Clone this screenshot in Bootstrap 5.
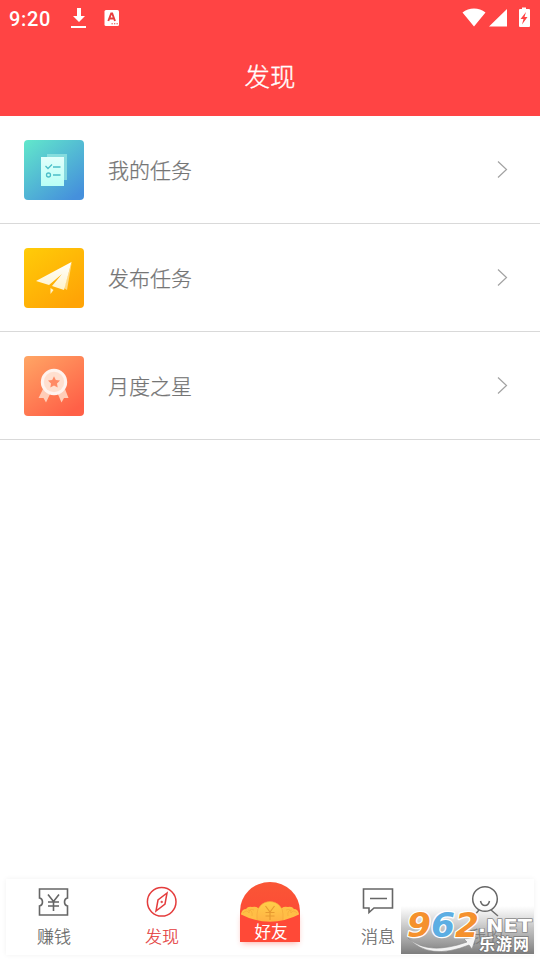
<!DOCTYPE html>
<html lang="zh-CN">
<head>
<meta charset="utf-8">
<meta name="viewport" content="width=device-width, initial-scale=1">
<title>发现</title>
<link href="https://cdn.jsdelivr.net/npm/bootstrap@5.3.0/dist/css/bootstrap.min.css" rel="stylesheet">
<style>
body{font-family:"Noto Sans CJK SC",sans-serif;font-weight:300;color:#757575;background:#fff}
svg{display:block;flex:none}
.screen{width:540px;height:960px;overflow:hidden}
.top-red{background:#ff4444;height:116px}
.status{height:36px;padding:0 9px 0 9px}
.clock{font:500 20px/36px Roboto,sans-serif;letter-spacing:.7px;width:62px;padding-top:1px}
.page-title{font-size:25.5px;line-height:38px;font-weight:300;padding-top:20px;-webkit-text-stroke:.35px currentColor}
.entry{height:108px;border-bottom:1px solid #d9d9d9;padding:0 30px 0 24px}
.entry-text{font-size:21px;line-height:32px;padding-bottom:2px;color:#757575;-webkit-text-stroke:.25px currentColor}
.dock{height:76px;margin:0 6px 5px;box-shadow:0 0 5px rgba(0,0,0,.06);background:#fff}
.dock-item{flex:none;width:108px;font-size:17px;line-height:24px;color:#666;padding-top:5px}
.dock-item.edge-start{width:102px;padding-right:6px}
.dock-item.edge-end{width:102px;padding-left:6px}
.dock-item.on{color:#e43c3c}
.dock-item svg{margin-bottom:4px}
.dock-item span{-webkit-text-stroke:.2px currentColor}
.wm{right:0;bottom:1px}
</style>
</head>
<body>
<div class="screen d-flex flex-column">
  <header class="top-red text-white">
    <div class="status d-flex align-items-center">
      <span class="clock">9:20</span>
      <svg width="16" height="22" viewBox="0 0 16 22" fill="#fff"><path d="M6 1h4v8h4l-6 6-6-6h4zM0 19h15v2H0z"/></svg>
      <svg class="ms-3" width="18" height="20" viewBox="0 0 18 20"><rect x="1.500" y="2" width="14.500" height="16" rx="1.500" fill="#fff"/><path d="M5.300 13 8.200 5.500h1L12 13M6.500 10.500h4.400" stroke="#e83e3e" stroke-width="1.900" fill="none"/><path d="M8.500 15.800h1.300M11 15.800h1.300M13.500 15.800h1.300" stroke="#e83e3e" stroke-width="1.100"/></svg>
      <svg class="ms-auto" width="69" height="24" viewBox="0 0 69 24" fill="#fff"><path d="M0.500 6.500C7 1 17 1 23.500 6.500L12 20.500zM27 20.500 45 3v17.500z"/><path d="M57 3h3V1.500h4V3h3q1 0 1 1v16q0 1-1 1h-9q-1 0-1-1V4q0-1 1-1z"/><path d="m64 6-5.500 7h3l-1.500 5.500 5.500-7.500h-3z" fill="#ff4444"/></svg>
    </div>
    <h1 class="page-title text-center m-0">发现</h1>
  </header>

  <main class="flex-grow-1">
    <a class="entry d-flex align-items-center text-decoration-none">
      <svg width="60" height="60" viewBox="0 0 60 60">
        <defs><linearGradient id="teal" x2=".8" y2="1"><stop stop-color="#62e8cb"/><stop offset="1" stop-color="#4590dc"/></linearGradient><linearGradient id="paper" x2="0" y2="1"><stop stop-color="#e2fffc"/><stop offset="1" stop-color="#b9fff5"/></linearGradient></defs>
        <rect width="60" height="60" rx="4" fill="url(#teal)"/><path d="M23 14h20v26H23z" fill="#96e5e1" opacity=".75"/><path d="M17 17h23v29H17z" fill="url(#paper)"/>
        <g fill="none" stroke="#4bbec8" stroke-width="1.300"><path d="m21.500 26 2.500 2.500 4-4M29 27h7.500M29 35h7.500"/><circle cx="24.500" cy="35" r="2"/></g>
      </svg>
      <span class="entry-text ms-4">我的任务</span>
      <svg class="ms-auto" width="14" height="20" viewBox="0 0 14 20"><path d="m2 1.500 8.500 8-8.500 8" fill="none" stroke="#a3a3a3" stroke-width="1.200"/></svg>
    </a>
    <a class="entry d-flex align-items-center text-decoration-none">
      <svg width="60" height="60" viewBox="0 0 60 60">
        <defs><linearGradient id="gold" x2=".7" y2="1"><stop stop-color="#ffcc08"/><stop offset="1" stop-color="#ffa406"/></linearGradient><linearGradient id="plane" x2="0" y2="1"><stop stop-color="#fff"/><stop offset="1" stop-color="#fff1c4"/></linearGradient></defs>
        <rect width="60" height="60" rx="4" fill="url(#gold)"/><path d="m48 13-5 29-3-2z" fill="#ffd983"/><path d="M47.500 14 12 33l13 4 13-11-10 12 12 4zM26.500 40v6l3-4z" fill="url(#plane)"/>
      </svg>
      <span class="entry-text ms-4">发布任务</span>
      <svg class="ms-auto" width="14" height="20" viewBox="0 0 14 20"><path d="m2 1.500 8.500 8-8.500 8" fill="none" stroke="#a3a3a3" stroke-width="1.200"/></svg>
    </a>
    <a class="entry d-flex align-items-center text-decoration-none">
      <svg width="60" height="60" viewBox="0 0 60 60">
        <defs><linearGradient id="coral" x2=".7" y2="1"><stop stop-color="#ffa665"/><stop offset="1" stop-color="#ff6047"/></linearGradient></defs>
        <rect width="60" height="60" rx="4" fill="url(#coral)"/><path d="m19 33-4.500 9h5l2.500 4.500L27 36zM41 33l3.500 9h-4.500l-2.500 4.500L33 36z" fill="#ffcdb8"/><circle cx="30" cy="26" r="13.200" fill="#fff3ee"/><circle cx="30" cy="26" r="10.200" fill="#ffdfcf"/><path d="m30 20.200 1.800 3.700 4.200.6-3 2.900.7 4.100-3.700-2-3.700 2 .7-4.100-3-2.900 4.200-.6z" fill="#ff8a65"/>
      </svg>
      <span class="entry-text ms-4">月度之星</span>
      <svg class="ms-auto" width="14" height="20" viewBox="0 0 14 20"><path d="m2 1.500 8.500 8-8.500 8" fill="none" stroke="#a3a3a3" stroke-width="1.200"/></svg>
    </a>
  </main>

  <nav class="dock d-flex position-relative">
    <div class="dock-item edge-start d-flex flex-column align-items-center">
      <svg width="32" height="36" viewBox="0 0 32 36" fill="none" stroke="#666" stroke-width="1.600"><path d="M1.500 14V5h28v9q-3 .5-3 4t3 4v9h-28v-9q3-.5 3-4t-3-4zM10 10.500l5.500 7 5.500-7M15.500 17.500V27M10 18h11M10 22h11"/></svg>
      <span>赚钱</span>
    </div>
    <div class="dock-item on d-flex flex-column align-items-center">
      <svg width="32" height="36" viewBox="0 0 32 36" fill="none" stroke="#e43c3c" stroke-width="1.500"><circle cx="15.700" cy="17.800" r="14.300"/><path d="m21 9-9 7-2 11 9-7z"/><circle cx="15.700" cy="18" r=".4"/></svg>
      <span>发现</span>
    </div>
    <div class="dock-item d-flex flex-column align-items-center pt-0">
      <svg width="80" height="76" viewBox="0 0 80 76">
        <defs><linearGradient id="envelope" x2="0" y2="1"><stop stop-color="#fa5636"/><stop offset="1" stop-color="#ff4336"/></linearGradient><linearGradient id="coin" x2="0" y2="1"><stop stop-color="#ffce49"/><stop offset="1" stop-color="#ffb044"/></linearGradient><filter id="glow" x="-30%" y="-30%" width="160%" height="160%"><feGaussianBlur stdDeviation="3"/></filter></defs>
        <path d="M12 37h56v27H12z" fill="#ff4434" opacity=".45" filter="url(#glow)"/>
        <path d="M10 63V32a30 29 0 0 1 60 0v31z" fill="url(#envelope)"/>
        <path d="M11 35q1-5 5-5 2-3 6-2 4-1 6 1h24q2-2 6-1 4-1 6 2 4 0 5 5v9H11z" fill="#ffbe46"/>
        <g fill="none" stroke="#f3a637" stroke-width=".6"><path d="M13 34q4-4 6 0 0-5 5-3M18 31q5 0 4 6M67 34q-4-4-6 0 0-5-5-3M62 31q-5 0-4 6"/></g>
        <path d="M27 44V35a13 12.500 0 0 1 26 0v9z" fill="url(#coin)" stroke="#f4a339" stroke-width=".6"/>
        <path d="m35.500 27 4.500 6 4.500-6M40 33v8M35.500 33.500h9M35.500 37h9" fill="none" stroke="#e79a30" stroke-width="1.200"/>
        <path d="M10 35q30 15.500 60 0V63H10z" fill="#ff4937"/>
        <text x="41" y="58.500" text-anchor="middle" fill="#fff" font-size="16.500" font-weight="400">好友</text>
      </svg>
    </div>
    <div class="dock-item d-flex flex-column align-items-center">
      <svg width="32" height="36" viewBox="0 0 32 36" fill="none" stroke="#666" stroke-width="1.600"><path d="M1.500 5h29v19H12l-5 4.500V24H1.500zM8 14.500h17"/></svg>
      <span>消息</span>
    </div>
    <div class="dock-item edge-end d-flex flex-column align-items-center">
      <svg width="32" height="36" viewBox="0 0 32 36" fill="none" stroke="#666" stroke-width="1.500"><circle cx="15" cy="15" r="12.300"/><path d="M10.500 17q1 4.500 4.500 4.500t4.500-4.500M9 26l-6 7M21 26l7 6"/></svg>
      <span>我的</span>
    </div>
    <svg class="wm position-absolute" width="133" height="48" viewBox="0 0 133 48">
      <defs><linearGradient id="shade" x2="0" y2="1"><stop stop-color="#999" stop-opacity="0"/><stop offset=".45" stop-color="#8b8b8b" stop-opacity=".5"/><stop offset="1" stop-color="#777" stop-opacity=".96"/></linearGradient></defs>
      <path d="M0 0h133v48H0z" fill="url(#shade)"/>
      <path d="M7 32q20 18 59 4l-3-3 12-2-4 12-3-4Q28 55 7 32z" fill="#f3f3f3" stroke="#888" stroke-width=".6"/>
      <g font-family="DejaVu Sans, sans-serif" font-weight="700" paint-order="stroke" stroke-linejoin="round">
        <g font-size="33" font-style="italic" stroke="#fff" stroke-width="2.500"><text x="6" y="31" textLength="24" lengthAdjust="spacingAndGlyphs" fill="#f5912d">9</text><text x="30" y="31" textLength="24" lengthAdjust="spacingAndGlyphs" fill="#5caee3">6</text><text x="54" y="31" textLength="24" lengthAdjust="spacingAndGlyphs" fill="#f5912d">2</text></g>
        <text x="77" y="26" font-size="18" textLength="54" lengthAdjust="spacingAndGlyphs" fill="#fff" stroke="#888" stroke-width="1.500">.NET</text>
      </g>
      <text x="78" y="44" font-size="16" font-weight="700" textLength="50" fill="#fff" stroke="#777" stroke-width="1.500" paint-order="stroke">乐游网</text>
    </svg>
  </nav>
</div>
<script src="https://cdn.jsdelivr.net/npm/bootstrap@5.3.0/dist/js/bootstrap.bundle.min.js"></script>
</body>
</html>
